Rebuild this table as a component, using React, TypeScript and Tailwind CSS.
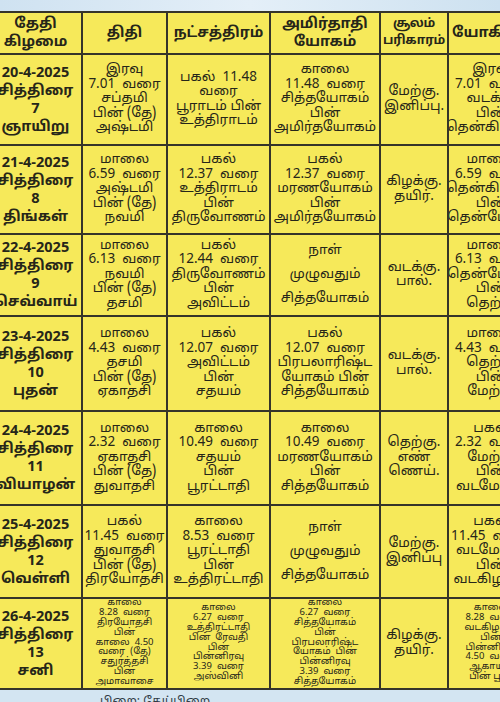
import React from 'react'

type Row = {
  date: string[]
  thithi: string[]
  star: string[]
  yogam: string[]
  soolam: string[]
  yogini: string[]
  h: string
  small?: boolean
  spread?: boolean
}

const rows: Row[] = [
  {
    h: 'h-[89px]',
    date: ['20-4-2025', 'சித்திரை', '7', 'ஞாயிறு'],
    thithi: ['இரவு', '7.01  வரை', 'சப்தமி', 'பின் (தே)', 'அஷ்டமி'],
    star: ['பகல்  11.48', 'வரை', 'பூராடம் பின்', 'உத்திராடம்'],
    yogam: ['காலை', '11.48  வரை', 'சித்தயோகம்', 'பின்', 'அமிர்தயோகம்'],
    soolam: ['மேற்கு.', 'இனிப்பு.'],
    yogini: ['இரவு', '7.01  வரை', 'வடக்கு', 'பின்', 'தென்கிழக்கு'],
  },
  {
    h: 'h-[87px]',
    date: ['21-4-2025', 'சித்திரை', '8', 'திங்கள்'],
    thithi: ['மாலை', '6.59  வரை', 'அஷ்டமி', 'பின் (தே)', 'நவமி'],
    star: ['பகல்', '12.37  வரை', 'உத்திராடம்', 'பின்', 'திருவோணம்'],
    yogam: ['பகல்', '12.37  வரை', 'மரணயோகம்', 'பின்', 'அமிர்தயோகம்'],
    soolam: ['கிழக்கு.', 'தயிர்.'],
    yogini: ['மாலை', '6.59  வரை', 'தென்கிழக்கு', 'பின்', 'தென்மேற்கு'],
  },
  {
    h: 'h-[80px]',
    date: ['22-4-2025', 'சித்திரை', '9', 'செவ்வாய்'],
    thithi: ['மாலை', '6.13  வரை', 'நவமி', 'பின் (தே)', 'தசமி'],
    star: ['பகல்', '12.44  வரை', 'திருவோணம்', 'பின்', 'அவிட்டம்'],
    yogam: ['நாள்', 'முழுவதும்', 'சித்தயோகம்'],
    spread: true,
    soolam: ['வடக்கு.', 'பால்.'],
    yogini: ['மாலை', '6.13  வரை', 'தென்மேற்கு', 'பின்', 'தெற்கு'],
  },
  {
    h: 'h-[93px]',
    date: ['23-4-2025', 'சித்திரை', '10', 'புதன்'],
    thithi: ['மாலை', '4.43  வரை', 'தசமி', 'பின் (தே)', 'ஏகாதசி'],
    star: ['பகல்', '12.07  வரை', 'அவிட்டம்', 'பின்', 'சதயம்'],
    yogam: ['பகல்', '12.07  வரை', 'பிரபலாரிஷ்ட', 'யோகம் பின்', 'சித்தயோகம்'],
    soolam: ['வடக்கு.', 'பால்.'],
    yogini: ['மாலை', '4.43  வரை', 'தெற்கு', 'பின்', 'மேற்கு'],
  },
  {
    h: 'h-[92px]',
    date: ['24-4-2025', 'சித்திரை', '11', 'வியாழன்'],
    thithi: ['மாலை', '2.32  வரை', 'ஏகாதசி', 'பின் (தே)', 'துவாதசி'],
    star: ['காலை', '10.49  வரை', 'சதயம்', 'பின்', 'பூரட்டாதி'],
    yogam: ['காலை', '10.49  வரை', 'மரணயோகம்', 'பின்', 'சித்தயோகம்'],
    soolam: ['தெற்கு.', 'எண்', 'ணெய்.'],
    yogini: ['பகல்', '2.32  வரை', 'மேற்கு', 'பின்', 'வடமேற்கு'],
  },
  {
    h: 'h-[91px]',
    date: ['25-4-2025', 'சித்திரை', '12', 'வெள்ளி'],
    thithi: ['பகல்', '11.45  வரை', 'துவாதசி', 'பின் (தே)', 'திரயோதசி'],
    star: ['காலை', '8.53  வரை', 'பூரட்டாதி', 'பின்', 'உத்திரட்டாதி'],
    yogam: ['நாள்', 'முழுவதும்', 'சித்தயோகம்'],
    spread: true,
    soolam: ['மேற்கு.', 'இனிப்பு'],
    yogini: ['பகல்', '11.45  வரை', 'வடமேற்கு', 'பின்', 'வடகிழக்கு'],
  },
  {
    h: 'h-[89px]',
    small: true,
    date: ['26-4-2025', 'சித்திரை', '13', 'சனி'],
    thithi: ['காலை', '8.28  வரை', 'திரயோதசி', 'பின்', 'காலை  4.50', 'வரை  (தே)', 'சதுர்த்தசி', 'பின்', 'அமாவாசை'],
    star: ['காலை', '6.27  வரை', 'உத்திரட்டாதி', 'பின்  ரேவதி', 'பின்', 'பின்னிரவு', '3.39  வரை', 'அஸ்வினி'],
    yogam: ['காலை', '6.27  வரை', 'சித்தயோகம்', 'பின்', 'பிரபலாரிஷ்ட', 'யோகம்  பின்', 'பின்னிரவு', '3.39  வரை', 'சித்தயோகம்'],
    soolam: ['கிழக்கு.', 'தயிர்.'],
    yogini: ['காலை', '8.28  வரை', 'வடகிழக்கு', 'பின்', 'பின்னிரவு', '4.50  வரை', 'ஆகாயம்', 'பின் பூமி'],
  },
]

const font = "font-['Noto_Sans_Tamil','Noto_Sans',sans-serif]"

function Cell({ lines, cls, bold, small, spread }: { lines: string[]; cls: string; bold?: boolean; small?: boolean; spread?: boolean }) {
  return (
    <div className={`bg-[#f6e95a] flex flex-col items-center justify-center text-center whitespace-pre overflow-hidden text-[#262619] ${cls}`}>
      {lines.map((l, i) => (
        <div
          key={i}
          className={
            bold
              ? 'text-[14.5px] font-bold leading-[18px]'
              : small
                ? 'text-[9.5px] leading-[9.8px]'
                : spread
                  ? 'text-[13.5px] leading-[24px]'
                  : 'text-[13.5px] leading-[14.5px]'
          }
        >
          {l}
        </div>
      ))}
    </div>
  )
}

export default function App() {
  return (
    <div className={`w-[500px] h-[702px] overflow-hidden bg-[#d3e5f2] ${font}`}>
      {/* top sky strip */}
      <div className="h-[11px] bg-gradient-to-r from-[#cfe2f1] via-[#e4eff8] to-[#cde1f0]" />

      <div className="ml-[-10px] w-[533px] bg-[#35342a] py-[2px]">
        <div className="grid grid-cols-[91px_83px_101px_108px_66px_84px] gap-[2px]">
          <Cell cls="h-[40px]" bold lines={['தேதி', 'கிழமை']} />
          <Cell cls="h-[40px]" bold lines={['திதி']} />
          <Cell cls="h-[40px]" bold lines={['நட்சத்திரம்']} />
          <Cell cls="h-[40px]" bold lines={['அமிர்தாதி', 'யோகம்']} />
          <div className="bg-[#f6e95a] h-[40px] flex flex-col items-center justify-center text-center text-[#262619] font-bold text-[12.5px] leading-[17px] tracking-[-0.3px]">
            <div>சூலம்</div>
            <div>பரிகாரம்</div>
          </div>
          <Cell cls="h-[40px]" bold lines={['யோகினி']} />

          {rows.map((r) => (
            <React.Fragment key={r.date[0]}>
              <Cell cls={r.h} bold lines={r.date} />
              <Cell cls={r.h} small={r.small} lines={r.thithi} />
              <Cell cls={r.h} small={r.small} lines={r.star} />
              <Cell cls={r.h} small={r.small} spread={r.spread} lines={r.yogam} />
              <Cell cls={r.h} lines={r.soolam} />
              <Cell cls={r.h} small={r.small} lines={r.yogini} />
            </React.Fragment>
          ))}
        </div>
      </div>

      {/* bottom strip caption */}
      <div className="pl-[100px] pt-[5px] text-[12px] leading-[14px] text-[#2f3a44]">பிறை: தேய்பிறை</div>
    </div>
  )
}
